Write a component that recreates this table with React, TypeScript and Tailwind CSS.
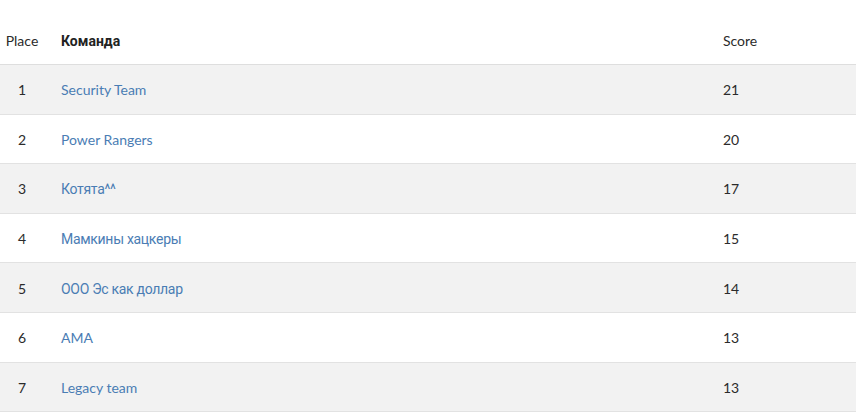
const rows: [number, string, number][] = [
  [1, "Security Team", 21],
  [2, "Power Rangers", 20],
  [3, "Котята^^", 17],
  [4, "Мамкины хацкеры", 15],
  [5, "ООО Эс как доллар", 14],
  [6, "AMA", 13],
  [7, "Legacy team", 13],
];

const isCyr = (s: string) => /[А-Яа-яЁё]/.test(s);

export default function App() {
  return (
    <div className="w-[856px] h-[420px] overflow-hidden bg-white text-[14px] text-[#2b2b2b] font-['Lato','Noto_Sans',sans-serif]">
      <div className="grid grid-cols-[44px_679px_1fr] h-[65px] border-b border-[#dedede] items-end pb-[13px] leading-5">
        <div className="text-center">Place</div>
        <div className="pl-[17px] font-bold font-['Roboto',sans-serif] text-[#222]">Команда</div>
        <div>Score</div>
      </div>
      {rows.map(([place, team, score], i) => (
        <div
          key={place}
          className={`grid grid-cols-[44px_679px_1fr] h-[49.6px] pt-[2px] items-center border-b border-[#e2e2e2] leading-5 ${
            i % 2 === 0 ? "bg-[#f2f2f2]" : "bg-white"
          }`}
        >
          <div className="text-center">{place}</div>
          <div className="pl-[17px]">
            <a
              href="#"
              className={`text-[#4a7db4] ${isCyr(team) ? "font-['Roboto',sans-serif] tracking-[-0.3px]" : ""}`}
            >
              {team}
            </a>
          </div>
          <div>{score}</div>
        </div>
      ))}
    </div>
  );
}
